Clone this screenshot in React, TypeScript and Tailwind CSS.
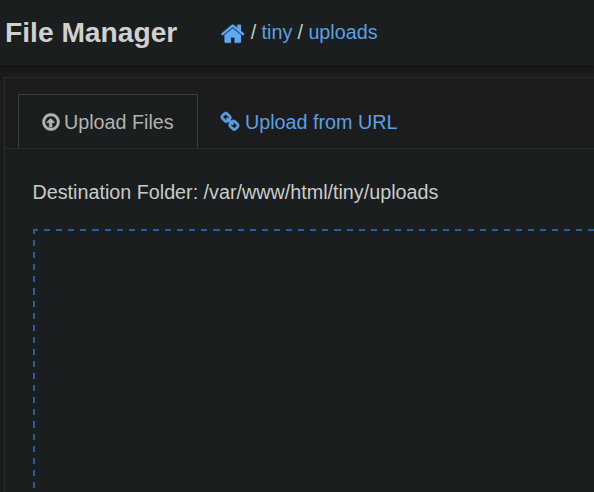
import type { ReactNode } from "react";

function Glyph({ d, className }: { d: string; className: string }) {
  return (
    <svg viewBox="0 0 1792 1792" className={className} fill="currentColor" stroke="currentColor">
      <path d={d} />
    </svg>
  );
}

const HOME =
  "M1472 992v480q0 26-19 45t-45 19h-384v-384h-256v384h-384q-26 0-45-19t-19-45v-480q0-1 .5-3t.5-3l575-474 575 474q1 2 1 6zm223-69l-62 74q-8 9-21 11h-3q-13 0-21-7l-692-577-692 577q-12 8-24 7-13-2-21-11l-62-74q-8-10-7-23.5t11-21.5l719-599q32-26 76-26t76 26l244 204v-195q0-14 9-23t23-9h192q14 0 23 9t9 23v408l219 182q10 8 11 21.5t-7 23.5z";

const ARROW_CIRCLE_UP =
  "M1216 928q0 14-9 23t-23 9h-192v352q0 13-9.5 22.5t-22.5 9.5h-192q-13 0-22.5-9.5t-9.5-22.5v-352h-192q-14 0-23-9t-9-23q0-12 10-24l319-319q10-9 23-9t23 9l320 320q9 9 9 23zm-320-576q-148 0-273 73t-198 198-73 273 73 273 198 198 273 73 273-73 198-198 73-273-73-273-198-198-273-73zm768 544q0 209-103 385.5t-279.5 279.5-385.5 103-385.5-103-279.5-279.5-103-385.5 103-385.5 279.5-279.5 385.5-103 385.5 103 279.5 279.5 103 385.5z";

const CHAIN =
  "M1520 1216q0-40-28-68l-208-208q-28-28-68-28-42 0-72 32 3 3 19 18.5t21.5 21.5 15 19 13 25.5 3.5 27.5q0 40-28 68t-68 28q-15 0-27.5-3.5t-25.5-13-19-15-21.5-21.5-18.5-19q-33 31-33 73 0 40 28 68l206 207q27 27 68 27 40 0 68-26l147-146q28-28 28-67zm-703-705q0-40-28-68l-206-207q-28-28-68-28-39 0-68 27l-147 146q-28 28-28 67 0 40 28 68l208 208q27 27 68 27 42 0 72-31-3-3-19-18.5t-21.5-21.5-15-19-13-25.5-3.5-27.5q0-40 28-68t68-28q15 0 27.5 3.5t25.5 13 19 15 21.5 21.5 18.5 19q33-31 33-73zm895 705q0 120-85 203l-147 146q-83 83-203 83-121 0-204-85l-206-207q-83-83-83-203 0-123 88-209l-88-88q-86 88-208 88-120 0-204-84l-208-208q-84-84-84-204t85-203l147-146q83-83 203-83 121 0 204 85l206 207q83 83 83 203 0 123-88 209l88 88q86-88 208-88 120 0 204 84l208 208q84 84 84 204z";

function Crumb({ children }: { children: ReactNode }) {
  return <a className="text-[#5c9fe2]">{children}</a>;
}

export default function App() {
  return (
    <div className="flex h-[492px] w-[594px] flex-col overflow-hidden bg-[#1b1c1e] font-['Liberation_Sans',Arial,sans-serif] text-[19.74px] text-[#cbcbc9]">
      <header className="flex h-[65px] shrink-0 items-center bg-[#1a1e1f] pl-[5px] shadow-[0_2px_7px_#101114]">
        <h1 className="w-[215px] pb-px text-[28.2px] font-bold text-[#d0d0d0]">File Manager</h1>
        <nav className="flex items-center gap-[5.3px]">
          <a className="pt-0.5 text-[#5fa8f5]"><Glyph d={HOME} className="size-[25.5px] stroke-[20]" /></a>
          <span>/</span><Crumb>tiny</Crumb><span>/</span><Crumb>uploads</Crumb>
        </nav>
      </header>
      <main className="ml-1 mt-3 flex flex-1 flex-col border-l border-t border-[#2a2b2d]">
        <div className="flex h-[71px] shrink-0 items-end border-b border-[#292b2c] pl-[13px]">
          <div className="flex h-[54px] w-[180px] items-center gap-[3px] border border-b-0 border-[#3b3d3f] bg-[#1a1e1f] pl-[22px] text-[#b3b3b1]">
            <Glyph d={ARROW_CIRCLE_UP} className="size-5 stroke-[40]" /><span className="pt-0.5">Upload Files</span>
          </div>
          <a className="flex h-[54px] items-center gap-[5px] pl-[22px] pt-[3px] text-[#5c9fe2]">
            <Glyph d={CHAIN} className="mb-0.5 size-5 overflow-visible stroke-[75]" /><span>Upload from URL</span>
          </a>
        </div>
        <section className="flex flex-1 flex-col bg-[#1a1e1f] pl-7 pt-[30px]">
          <p className="-ml-[0.5px] leading-[26px]">Destination Folder: /var/www/html/tiny/uploads</p>
          <div className="mt-6 flex-1 bg-[repeating-linear-gradient(90deg,#2d5b9b_0_5px,transparent_5px_11px,#2d5b9b_11px_12.1px),repeating-linear-gradient(180deg,#2d5b9b_0_5px,transparent_5px_11px,#2d5b9b_11px_12.1px)] bg-[size:100%_2px,2px_100%] bg-no-repeat" />
        </section>
      </main>
    </div>
  );
}
